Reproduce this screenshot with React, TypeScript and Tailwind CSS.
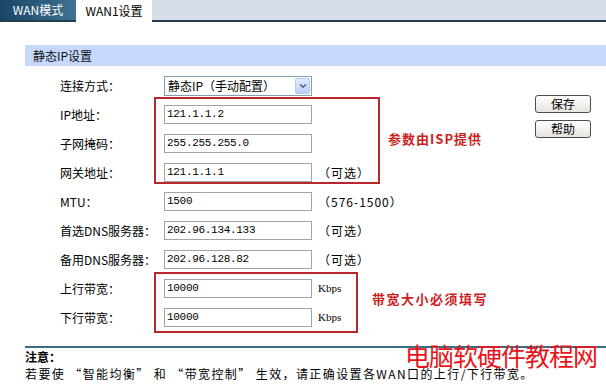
import { ChevronDown } from 'lucide-react'

const cjk = { fontFamily: '"Noto Sans CJK SC", "Liberation Sans", sans-serif' }
const mono = { fontFamily: '"Liberation Mono", "Noto Sans CJK SC", monospace' }

function Field({ label, value, suffix }: { label: string; value: string; suffix?: string }) {
  return (
    <div className="flex h-[29px] items-center pl-[35px]">
      <div className="w-[104px] text-[12px] text-black">{label}</div>
      <div
        className="flex h-[19px] w-[148px] items-center border border-[#9ea4aa] bg-white pl-[2px] text-[11px] tracking-[-0.3px] text-black"
        style={mono}
      >
        {value}
      </div>
      {suffix && (
        <div
          className={suffix === 'Kbps' ? 'ml-[6px] text-[11px] text-black' : 'ml-[6px] text-[12px] tracking-[1px] text-black'}
          style={suffix === 'Kbps' ? { fontFamily: '"Liberation Serif", serif' } : undefined}
        >
          {suffix}
        </div>
      )}
    </div>
  )
}

function Button({ children }: { children: string }) {
  return (
    <div className="flex h-[18px] w-[56px] items-center justify-center rounded-[3px] border border-[#4d4d4d] bg-gradient-to-b from-white to-[#e6e4dc] text-[12px] leading-none text-black">
      {children}
    </div>
  )
}

export default function App() {
  return (
    <div className="relative h-[390px] w-[606px] overflow-hidden bg-white" style={cjk}>
      {/* Tabs */}
      <div className="flex h-[22px] bg-[#d7dee8]">
        <div className="flex h-[22px] w-[76px] items-center justify-center border-b-2 border-[#22404f] bg-gradient-to-r from-[#1b4465] to-[#3f7393] text-[12px] text-white">
          WAN模式
        </div>
        <div className="flex h-[22px] w-[76px] items-center justify-center bg-white text-[12px] text-black">
          WAN1设置
        </div>
        <div className="flex-1 border-b-2 border-[#22404f]" />
      </div>

      <div className="pl-[25px] pt-[23px]">
        <div className="h-[21px] bg-[#c6d9fc] pl-[8px] text-[12px] leading-[21px] text-[#111]">静态IP设置</div>

        <div className="mt-[5px] flex">
          <div className="w-[505px]">
            {/* 连接方式 */}
            <div className="flex h-[29px] items-center pl-[35px]">
              <div className="w-[104px] text-[12px] text-black">连接方式：</div>
              <div className="flex h-[20px] w-[148px] items-center justify-between border border-[#7f9db9] bg-white pl-[3px] pr-[1px]">
                <span className="text-[12px] text-black">静态IP（手动配置）</span>
                <span className="flex h-[16px] w-[15px] items-center justify-center rounded-[2px] border border-[#b4c8f0] bg-gradient-to-b from-[#e2eafd] to-[#bccffa]">
                  <ChevronDown className="h-[10px] w-[10px] text-[#4d6185]" strokeWidth={3.5} />
                </span>
              </div>
            </div>

            {/* ISP group */}
            <div className="relative">
              <Field label="IP地址：" value="121.1.1.2" />
              <Field label="子网掩码：" value="255.255.255.0" />
              <Field label="网关地址：" value="121.1.1.1" suffix="（可选）" />
              <div className="absolute left-[129px] top-[-3px] h-[87px] w-[226px] border-2 border-[#b8272c]" />
              <div className="absolute left-[363px] top-[29px] text-[13px] font-bold tracking-[1px] text-[#cc1f1f]">
                参数由ISP提供
              </div>
            </div>

            <Field label="MTU：" value="1500" suffix="（576-1500）" />
            <Field label="首选DNS服务器：" value="202.96.134.133" suffix="（可选）" />
            <Field label="备用DNS服务器：" value="202.96.128.82" suffix="（可选）" />

            {/* Bandwidth group */}
            <div className="relative">
              <Field label="上行带宽：" value="10000" suffix="Kbps" />
              <Field label="下行带宽：" value="10000" suffix="Kbps" />
              <div className="absolute left-[129px] top-[-2px] h-[61px] w-[204px] border-2 border-[#b8272c]" />
              <div className="absolute left-[347px] top-[15px] text-[13px] font-bold tracking-[1.5px] text-[#cc1f1f]">
                带宽大小必须填写
              </div>
            </div>
          </div>

          <div className="flex flex-col gap-[7px] pl-[5px] pt-[24px]">
            <Button>保存</Button>
            <Button>帮助</Button>
          </div>
        </div>

        <div className="mt-[14px] h-[2px] bg-[#3c6c82]" />
        <div className="mt-[1px] text-[12px] font-bold leading-[16px] text-black">注意：</div>
        <div className="text-[12px] leading-[17px] tracking-[1.4px] text-black">
          若要使 “智能均衡” 和 “带宽控制” 生效，请正确设置各WAN口的上行/下行带宽。
        </div>
      </div>

      {/* watermark */}
      <div className="absolute left-[405px] top-[343px] text-[25px] leading-none tracking-[-1px] text-[#e8141b]">
        电脑软硬件教程网
      </div>
    </div>
  )
}
